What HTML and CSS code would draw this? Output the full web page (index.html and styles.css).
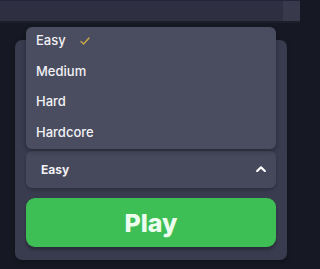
FILE: index.html
```html
<!DOCTYPE html>
<html>
<head>
<meta charset="utf-8">
<link rel="stylesheet" href="styles.css">
</head>
<body>
<div class="topbar"><div class="topbar-main"></div><div class="topbar-end"></div></div>
<div class="card">
  <div class="covered"></div>
  <div class="field">
    <ul class="menu">
      <li class="item selected">Easy
        <svg class="check" width="10" height="8" viewBox="0 0 10 8"><path d="M1 4.5 L3.6 7 L9 1" fill="none" stroke="#c9a94b" stroke-width="1.4" stroke-linecap="round" stroke-linejoin="round"/></svg>
      </li>
      <li class="item">Medium</li>
      <li class="item">Hard</li>
      <li class="item">Hardcore</li>
    </ul>
    <div class="select">
      <span class="select-label">Easy</span>
      <svg class="chevron" width="10" height="6" viewBox="0 0 10 6"><path d="M1.2 5 L5 1.3 L8.8 5" fill="none" stroke="#ffffff" stroke-width="2.2" stroke-linecap="round" stroke-linejoin="round"/></svg>
    </div>
  </div>
  <button class="play">Play</button>
</div>
</body>
</html>
```
FILE: styles.css
```css
* { box-sizing: border-box; }
html, body { margin: 0; padding: 0; }
body {
  width: 300px;
  height: 269px;
  overflow: hidden;
  background: #161823;
  font-family: Inter, "Noto Sans", sans-serif;
}
.topbar {
  display: flex;
  height: 23px;
  border-top: 1px solid #23253a;
  border-bottom: 2px solid #1c1e29;
}
.topbar-main { flex: 1; background: #2e3041; }
.topbar-end { width: 17px; background: #383a4c; }
.card {
  margin: 17px 13px 0 15px;
  height: 220px;
  background: #393b4e;
  border-radius: 7px;
  padding: 0 11px 13px 11px;
  display: flex;
  flex-direction: column;
  box-shadow: 0 2px 4px rgba(0,0,0,0.25);
}
.covered { height: 111px; flex: none; }
.field { position: relative; }
.menu {
  position: absolute;
  left: 0;
  right: 0;
  bottom: calc(100% + 2px);
  margin: 0;
  padding: 0;
  list-style: none;
  background: #4a4c5f;
  border-radius: 6px;
  box-shadow: 0 2px 5px rgba(0,0,0,0.3);
}
.item {
  display: flex;
  align-items: center;
  height: 30.5px;
  padding: 0 10px 4.5px 10px;
  color: #f1f1f5;
  font-size: 13px;
  font-weight: 500;
}
.check { margin-left: 14px; margin-top: 1px; }
.select {
  height: 37px;
  display: flex;
  align-items: center;
  justify-content: space-between;
  padding: 0 10px 0 15px;
  background: #46485b;
  border-radius: 6px;
  box-shadow: 0 2px 3px rgba(0,0,0,0.2);
}
.select-label {
  color: #f1f1f5;
  font-size: 12px;
  font-weight: 700;
}
.chevron { margin-top: -2px; }
.play {
  margin-top: 10px;
  height: 49px;
  border: none;
  border-radius: 9px;
  background: #3ebf56;
  color: #ecfcee;
  font-family: Inter, "Noto Sans", sans-serif;
  font-size: 25px;
  font-weight: 800;
  padding: 0;
  box-shadow: 0 3px 3px rgba(0,0,0,0.25);
}
```
